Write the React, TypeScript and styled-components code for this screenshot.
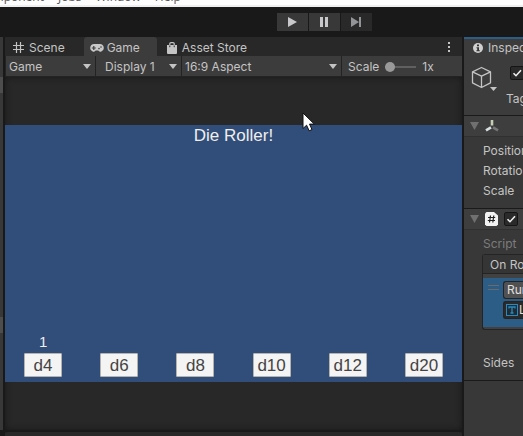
import React from "react";
import styled, { createGlobalStyle } from "styled-components";

const GlobalStyle = createGlobalStyle`
  * { box-sizing: border-box; }
  html, body, #root { height: 100%; }
  body {
    margin: 0;
    overflow: hidden;
    background: #191919;
    color: #c4c4c4;
    font: 12px/16px Inter, sans-serif;
  }
  button, select, input { font: inherit; color: inherit; margin: 0; }
`;

const Editor = styled.div`
  display: flex;
  flex-direction: column;
  height: 100%;
`;

const MenuBar = styled.nav`
  display: flex;
  align-items: flex-end;
  gap: 14px;
  height: 7px;
  flex: none;
  overflow: hidden;
  background: #fdfdfd;
  border-bottom: 2px solid #efeff0;
`;

const MenuItem = styled.button<{ $clipped?: boolean }>`
  display: flex;
  flex: none;
  justify-content: flex-end;
  width: ${(p) => (p.$clipped ? "44px" : "auto")};
  padding: 0;
  border: 0;
  background: none;
  color: #555;
  font: 12px/16px "Open Sans", sans-serif;
`;

const Toolbar = styled.header`
  display: flex;
  flex: none;
  justify-content: center;
  align-items: center;
  gap: 1px;
  height: 30px;
  padding-left: 125px;
`;

const PlayButton = styled.button<{ $dim?: boolean }>`
  display: grid;
  place-items: center;
  width: 31px;
  height: 18px;
  padding: 0;
  border: 0;
  background: ${(p) => (p.$dim ? "#292929" : "#383838")};
  color: ${(p) => (p.$dim ? "#929497" : "#c8c8ca")};
`;

const Workspace = styled.main`
  display: grid;
  grid-template-columns: 3px minmax(0, 1fr) 59px;
  column-gap: 2px;
  flex: 1;
  min-height: 0;
`;

const Hierarchy = styled.aside`
  display: flex;
  flex-direction: column;
  justify-content: space-between;
  background: #383838;
  padding: 40px 0 97px;
  margin-bottom: 6px;
`;

const HierarchyRow = styled.div`
  height: 16px;
  background: #4d4d4d;
`;

const Column = styled.section`
  display: flex;
  flex-direction: column;
  min-width: 0;
`;

const Tabs = styled.div`
  display: flex;
  flex: none;
  height: 19px;
  background: #282828;
`;

const Tab = styled.button<{ $active?: boolean }>`
  display: flex;
  align-items: center;
  gap: 3px;
  padding: 2px 17px 0 6px;
  border: 0;
  border-radius: 3px 3px 0 0;
  background: ${(p) => (p.$active ? "#3c3c3c" : "transparent")};
  white-space: nowrap;
  svg { flex: none; }
`;

const SceneTab = styled(Tab)`
  gap: 5px;
  padding-left: 8px;
  padding-right: 19px;
`;

const StoreTab = styled(Tab)`
  padding-left: 10px;
  gap: 5px;
`;

const MoreButton = styled.button`
  display: grid;
  place-items: center;
  width: 12px;
  margin-left: auto;
  margin-right: 7px;
  padding: 0;
  border: 0;
  background: none;
`;

const Controls = styled.div`
  display: grid;
  grid-template-columns: 89px 85px minmax(0, 1fr) 120px;
  gap: 1px;
  flex: none;
  height: 21px;
  padding: 0 0 1px 1px;
  background: #232323;
`;

const SelectBox = styled.label<{ $inset: number }>`
  display: grid;
  grid-template-columns: minmax(0, 1fr) 8px;
  align-items: center;
  padding: 1px 4px 0 ${(p) => p.$inset}px;
  background: #3c3c3c;
  select {
    appearance: none;
    width: 100%;
    padding: 0;
    border: 0;
    outline: 0;
    background: transparent;
    height: 18px;
  }
`;

const ScaleControl = styled.label`
  display: flex;
  align-items: center;
  gap: 6px;
  padding: 1px 0 0 6px;
  background: #3c3c3c;
  input {
    appearance: none;
    width: 31px;
    height: 10px;
    background: linear-gradient(#606060, #606060) center / 100% 2px no-repeat;
  }
  input::-webkit-slider-thumb {
    appearance: none;
    width: 10px;
    height: 10px;
    border-radius: 50%;
    background: #999;
  }
`;

const GameView = styled.div`
  position: relative;
  display: flex;
  flex-direction: column;
  justify-content: center;
  flex: 1;
  background: #282828;
  box-shadow: inset 0 0 6px #171717;
`;

const Stage = styled.div`
  display: flex;
  flex-direction: column;
  justify-content: space-between;
  aspect-ratio: 16 / 9;
  background: #314d79;
  font-family: "Liberation Sans", sans-serif;
`;

const StageTitle = styled.h1`
  margin: 0;
  color: #f0efeb;
  font-size: 17px;
  font-weight: 400;
  line-height: 22px;
  text-align: center;
`;

const Dice = styled.div`
  display: grid;
  grid-template-columns: repeat(6, 1fr);
  align-items: end;
  padding-bottom: 5px;
`;

const Die = styled.div`
  display: flex;
  flex-direction: column;
  align-items: center;
`;

const Result = styled.output`
  color: #f0efeb;
  font-size: 15px;
  line-height: 22px;
`;

const DieButton = styled.button`
  width: 38px;
  height: 24px;
  padding: 1px 0 0;
  border: 1px solid #b5b3ab;
  border-radius: 1px;
  background: #f4f4f4;
  color: #444;
  font-size: 17px;
  line-height: 20px;
`;

const BottomPanel = styled.div`
  flex: none;
  height: 6px;
  border-top: 2px solid #191919;
  border-radius: 3px 3px 0 0;
  background: #282828;
`;

const Pointer = styled.svg`
  position: absolute;
  left: 65%;
  top: 35px;
`;

const Inspector = styled(Column)`
  overflow: hidden;
  background: #383838;
  white-space: nowrap;
  svg { flex: none; }
`;

const InspectorTab = styled.button`
  display: flex;
  flex: none;
  align-items: center;
  justify-content: flex-start;
  gap: 5px;
  height: 19px;
  padding: 1px 0 0 9px;
  border: 0;
  border-top: 2px solid #2c5d87;
  background: #3c3c3c;
`;

const ObjectHeader = styled.div`
  display: grid;
  grid-template-columns: 28px 1fr;
  column-gap: 4px;
  flex: none;
  height: 59px;
  padding: 10px 0 0 7px;
  background: #3c3c3c;
`;

const ObjectFields = styled.div`
  display: flex;
  flex-direction: column;
  gap: 11px;
  padding-left: 7px;
`;

const TagLabel = styled.span`
  margin-left: -4px;
`;

const CheckBox = styled.input`
  appearance: none;
  flex: none;
  width: 14px;
  height: 14px;
  border: 1px solid #151515;
  border-radius: 2px;
  background: #2a2a2a url("data:image/svg+xml,%3Csvg xmlns='http://www.w3.org/2000/svg' viewBox='0 0 12 12'%3E%3Cpath d='M2.5 6.2 5 8.7 10 3.2' fill='none' stroke='%23eee' stroke-width='1.6'/%3E%3C/svg%3E") center / 12px 12px no-repeat;
`;

const ComponentHeader = styled.div`
  display: flex;
  flex: none;
  align-items: center;
  gap: 6px;
  height: 22px;
  padding-left: 6px;
  border-top: 1px solid #1a1a1a;
  border-bottom: 1px solid #303030;
  background: #3e3e3e;
`;

const TransformFields = styled.div`
  display: flex;
  flex-direction: column;
  gap: 4px;
  flex: none;
  padding: 6px 0 9px 19px;
`;

const ScriptFields = styled.div`
  display: flex;
  flex-direction: column;
  flex: none;
  padding: 6px 0 9px 19px;
  border-bottom: 1px solid #1a1a1a;
`;

const ScriptLabel = styled.span`
  color: #7c7c7c;
`;

const EventList = styled.div`
  margin: 2px 0 25px -1px;
  border: 1px solid #242424;
  border-right: 0;
  border-radius: 3px 0 0 3px;
  background: #414141;
  padding-bottom: 2px;
`;

const EventTitle = styled.div`
  height: 19px;
  padding: 2px 0 0 7px;
  border-bottom: 1px solid #242424;
  background: #353535;
  margin-bottom: 4px;
`;

const EventEntry = styled.div`
  display: grid;
  grid-template-columns: 11px 1fr;
  column-gap: 4px;
  height: 49px;
  padding: 3px 0 0 5px;
  background: #2c5d87;
`;

const Grip = styled.span`
  height: 5px;
  margin-top: 4px;
  border: solid #6c6a68;
  border-width: 1px 0;
`;

const EventFields = styled.div`
  display: flex;
  flex-direction: column;
  gap: 2px;
`;

const EventField = styled.button<{ $dark?: boolean }>`
  display: flex;
  align-items: center;
  justify-content: flex-start;
  gap: 1px;
  height: 18px;
  padding: 0 0 0 ${(p) => (p.$dark ? 2 : 3)}px;
  border: 1px solid #242424;
  border-right: 0;
  border-radius: 3px 0 0 3px;
  background: ${(p) => (p.$dark ? "#2a2a2a" : "#515151")};
  color: #e0e0e0;
`;

const Arrow = () => (
  <svg width="8" height="5" viewBox="0 0 8 5"><path d="M0 0h8L4 5z" fill="#c4c4c4" /></svg>
);

const Foldout = () => (
  <svg width="9" height="8" viewBox="0 0 9 8"><path d="M0 0h9L4.5 8z" fill="#707070" /></svg>
);

const Dropdown = ({ label, value, inset }: { label: string; value: string; inset: number }) => (
  <SelectBox $inset={inset}>
    <select aria-label={label}><option>{value}</option></select>
    <Arrow />
  </SelectBox>
);

const dice = ["d4", "d6", "d8", "d10", "d12", "d20"];

export default function App() {
  return (
    <Editor>
      <GlobalStyle />
      <MenuBar>
        <MenuItem $clipped>Component</MenuItem>
        <MenuItem>Jobs</MenuItem>
        <MenuItem>Window</MenuItem>
        <MenuItem>Help</MenuItem>
      </MenuBar>
      <Toolbar>
        <PlayButton aria-label="Play">
          <svg width="9" height="10" viewBox="0 0 9 10"><path d="M0 0l9 5-9 5z" fill="currentColor" /></svg>
        </PlayButton>
        <PlayButton aria-label="Pause">
          <svg width="9" height="10" viewBox="0 0 9 10"><path d="M0 0h3v10H0zM5 0h3v10H5z" fill="currentColor" /></svg>
        </PlayButton>
        <PlayButton aria-label="Step" $dim>
          <svg width="10" height="10" viewBox="0 0 10 10"><path d="M0 0l8 5-8 5zM8 0h2v10H8z" fill="currentColor" /></svg>
        </PlayButton>
      </Toolbar>
      <Workspace>
        <Hierarchy><HierarchyRow /><HierarchyRow /></Hierarchy>
        <Column>
          <Tabs>
            <SceneTab>
              <svg width="11" height="11" viewBox="0 0 11 11"><path d="M3.5 0v11M7.5 0v11M0 3.5h11M0 7.5h11" stroke="#c4c4c4" strokeWidth="1.2" /></svg>
              Scene
            </SceneTab>
            <Tab $active>
              <svg width="14" height="8" viewBox="0 0 14 8">
                <path d="M4 0h6a4 4 0 0 1 1 7.8C9.6 8 8.8 6.4 8 6.4H6C5.2 6.4 4.4 8 3 7.8A4 4 0 0 1 4 0z" fill="#c8c8c8" />
                <path d="M3.8 2v4M1.8 4h4" stroke="#3c3c3c" strokeWidth="1.2" />
                <circle cx="9" cy="4.6" r=".8" fill="#3c3c3c" /><circle cx="11" cy="3" r=".8" fill="#3c3c3c" />
              </svg>
              Game
            </Tab>
            <StoreTab>
              <svg width="10" height="12" viewBox="0 0 10 12">
                <path d="M0 3h10v8a1 1 0 0 1-1 1H1a1 1 0 0 1-1-1z" fill="#c4c4c4" />
                <path d="M2.8 3V1.8Q2.8.6 4 .6h2q1.2 0 1.2 1.2V3" fill="none" stroke="#c4c4c4" strokeWidth="1.2" />
                <path d="M2.8 3.5v1.7M7.2 3.5v1.7" stroke="#282828" />
              </svg>
              Asset Store
            </StoreTab>
            <MoreButton aria-label="Panel options">
              <svg width="2" height="10" viewBox="0 0 2 10"><path d="M0 0h2v2H0zM0 4h2v2H0zM0 8h2v2H0z" fill="#c4c4c4" /></svg>
            </MoreButton>
          </Tabs>
          <Controls>
            <Dropdown label="View" value="Game" inset={3} />
            <Dropdown label="Display" value="Display 1" inset={9} />
            <Dropdown label="Aspect ratio" value="16:9 Aspect" inset={3} />
            <ScaleControl>
              Scale
              <input type="range" min="1" max="5" defaultValue="1" />
              <span>1x</span>
            </ScaleControl>
          </Controls>
          <GameView>
            <Stage>
              <StageTitle>Die Roller!</StageTitle>
              <Dice>
                {dice.map((die) => (
                  <Die key={die}>
                    {die === "d4" && <Result>1</Result>}
                    <DieButton>{die}</DieButton>
                  </Die>
                ))}
              </Dice>
            </Stage>
            <Pointer width="13" height="20" viewBox="0 0 13 20">
              <path d="M1 1v15.5l3.6-3.3 2.5 5.6 2.9-1.2-2.5-5.5h4.8z" fill="#fff" stroke="#111" />
            </Pointer>
          </GameView>
          <BottomPanel />
        </Column>
        <Inspector>
          <InspectorTab>
            <svg width="10" height="10" viewBox="0 0 10 10">
              <circle cx="5" cy="5" r="5" fill="#d0d0d0" />
              <path d="M4 1.5h2v1.7H4zM3.5 4.2H6v3.1h.8v1H3.4v-1h.8V5.2h-.7z" fill="#333" />
            </svg>
            Inspector
          </InspectorTab>
          <ObjectHeader>
            <svg width="28" height="28" viewBox="0 0 28 28">
              <path d="M10.5 1.5l9 4.3v11l-9 4.7-9-4.7v-11zM1.5 5.8l9 4.4 9-4.4M10.5 10.2v11.3" fill="none" stroke="#c4c4c4" strokeWidth="1.3" strokeLinejoin="round" />
              <path d="M19 21h7l-3.5 4z" fill="#c4c4c4" />
            </svg>
            <ObjectFields>
              <CheckBox type="checkbox" defaultChecked aria-label="Active" />
              <TagLabel>Tag</TagLabel>
            </ObjectFields>
          </ObjectHeader>
          <ComponentHeader>
            <Foldout />
            <svg width="14" height="14" viewBox="0 0 14 14">
              <path d="M7 1v5.5" stroke="#c6cfb4" strokeWidth="2.6" />
              <path d="M6 8.3l-5 3" stroke="#d8e0e2" strokeWidth="2.6" />
              <path d="M8 8.3l5 3" stroke="#777" strokeWidth="2.6" />
            </svg>
          </ComponentHeader>
          <TransformFields>
            <span>Position</span>
            <span>Rotation</span>
            <span>Scale</span>
          </TransformFields>
          <ComponentHeader>
            <Foldout />
            <svg width="13" height="14" viewBox="0 0 13 14">
              <path d="M1.5 0H9l4 3.5v9L11.5 14h-10L0 12.5v-11z" fill="#f2f2f2" />
              <path d="M5.5 3.5l-1 7M8.8 3.5l-1 7M3 5.5h7.2M2.8 8.5H10" stroke="#222" strokeWidth="1.2" />
            </svg>
            <CheckBox type="checkbox" defaultChecked aria-label="Script enabled" />
          </ComponentHeader>
          <ScriptFields>
            <ScriptLabel>Script</ScriptLabel>
            <EventList>
              <EventTitle>On Roll</EventTitle>
              <EventEntry>
                <Grip />
                <EventFields>
                  <EventField>Runtime Only</EventField>
                  <EventField $dark>
                    <svg width="12" height="12" viewBox="0 0 12 12">
                      <rect x=".5" y=".5" width="11" height="11" fill="#222b32" stroke="#2a8abf" />
                      <path d="M3 4.5V3h6v1.5M6 3v6M4.5 9h3" fill="none" stroke="#2a8abf" strokeWidth="1.3" />
                    </svg>
                    Label
                  </EventField>
                </EventFields>
              </EventEntry>
            </EventList>
            <span>Sides</span>
          </ScriptFields>
        </Inspector>
      </Workspace>
    </Editor>
  );
}
